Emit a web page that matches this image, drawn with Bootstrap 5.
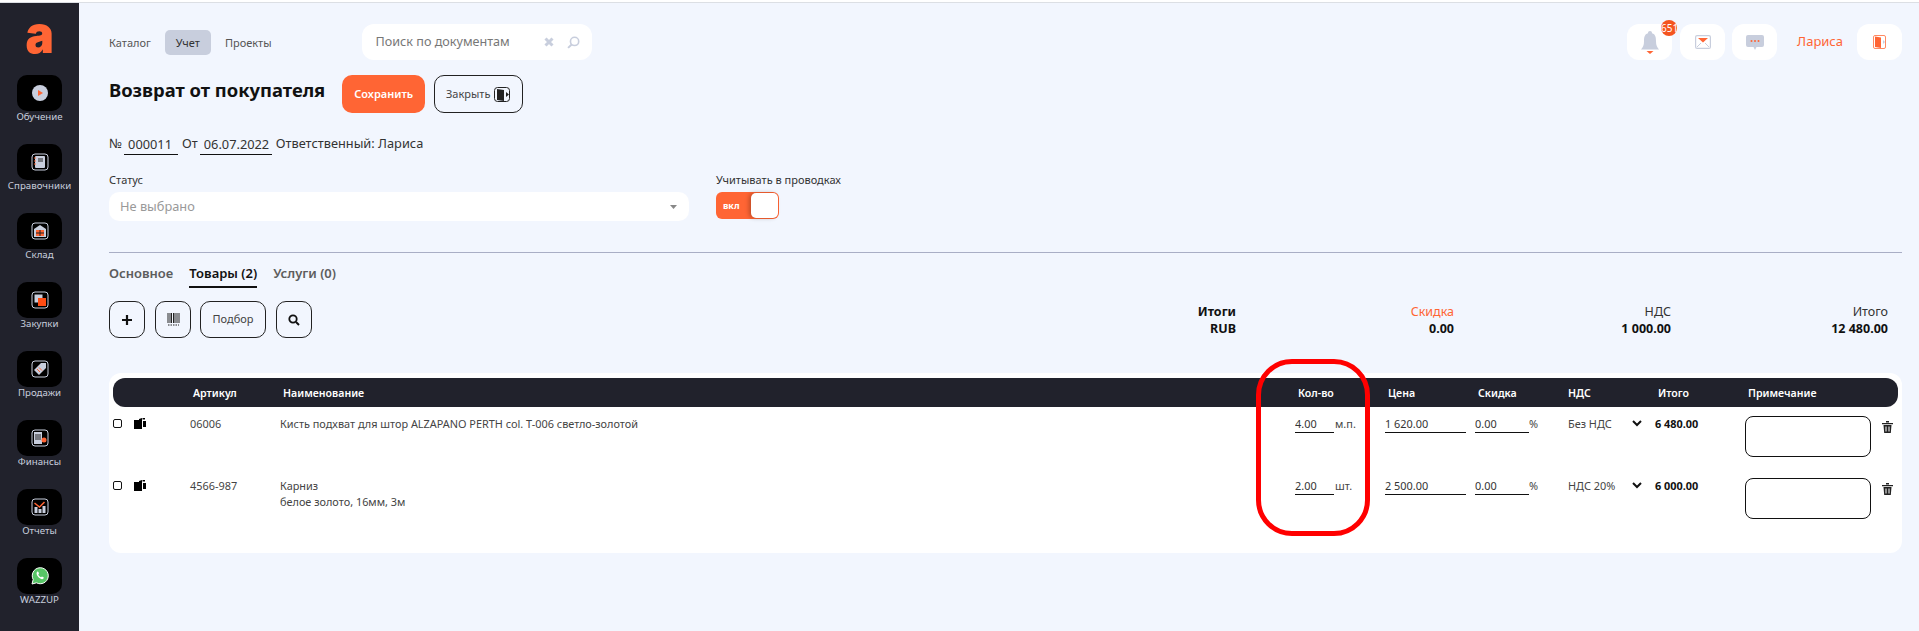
<!DOCTYPE html>
<html lang="ru">
<head>
  <meta charset="utf-8">
  <title>Возврат от покупателя</title>
  <link href="https://cdn.jsdelivr.net/npm/bootstrap@5.3.0/dist/css/bootstrap.min.css" rel="stylesheet">
  <style>
    html, body { height: 100%; }
    body { font-family: "Noto Sans", "Open Sans", sans-serif; background: #f2f6fe; color: #333; font-size: 12px; overflow: hidden; }
    .top-strip { height: 3px; background: #fff; border-bottom: 1px solid #dcdfe4; }
    .shell { height: calc(100% - 3px); position: relative; }

    .side { width: 79px; background: #21222c; flex: none; }
    .side-logo { height: 72px; color: #ff6534; font-family: Inter, sans-serif; font-weight: 900; font-size: 53px; line-height: 1; padding-top: 5px; }
    .side-logo span { display: inline-block; transform: scaleX(.9); }
    .side-item { height: 69px; color: #c8cedd; font-size: 9.7px; line-height: 10px; }
    .side-tile { width: 45px; height: 36px; background: #000; border-radius: 10px; margin-bottom: 1px; }
    .side-item svg { width: 18px; height: 18px; }

    .page { padding: 21px 17px 0 30px; min-width: 0; }
    .head-nav a { color: #555; text-decoration: none; font-size: 11px; padding: 0 11px; height: 25px; line-height: 25px; border-radius: 5px; }
    .head-nav a:first-child { padding-left: 0; padding-right: 0; margin-right: 14px; }
    .head-nav a.active { background: #c8cedd; color: #333; }
    .head-nav a.nav-last { margin-left: 3px; }
    .search-box { width: 230px; height: 36px; margin-left: 79px; background: #fff; border-radius: 12px; padding: 0 12px 0 14px; color: #777; font-size: 12.6px; }
    .search-clear { margin-right: 13px; }
    .top-tile { width: 45px; height: 36px; background: #fff; border-radius: 12px; }
    .tile-gap { margin-left: 8px; }
    .tile-gap-s { margin-left: 7px; }
    .bell-count { top: -4px; right: -5px; width: 16px; height: 16px; border-radius: 50%; background: #f4541f; color: #fff; font-size: 10px; line-height: 16px; white-space: nowrap; text-align: left; }
    .user-name { color: #ff6534; font-size: 13px; margin: 0 14px 0 20px; }

    .doc-title { font-size: 18.4px; font-weight: 700; color: #111; margin: 0 17px 8px 0; }
    .btn-save { width: 83px; height: 38px; margin-right: 9px; background: #ff6534; border: 0; border-radius: 10px; color: #fff; font-size: 11px; font-weight: 600; padding: 0; }
    .btn-line { height: 38px; border: 1px solid #222; border-radius: 10px; background: transparent; color: #444; font-size: 11px; padding: 0; }
    .btn-close-doc { width: 89px; }
    .title-row { margin-top: 15px; }

    .doc-line { font-size: 12.8px; margin-top: 20px; height: 22px; color: #333; }
    .line-input { border: 0; border-bottom: 1px solid #111; background: transparent; outline: 0; color: #333; padding: 0; border-radius: 0; }
    .doc-line .line-input { font-size: 12.8px; height: 22px; padding: 0 0 0 4px; margin: 0 4px 0 2px; }
    .input-num { width: 54px; }
    .input-date { width: 72px; }

    .status-col { width: 607px; }
    .field-label { font-size: 11px; line-height: 15px; padding-top: 1px; margin-bottom: 5px; color: #333; }
    .status-select.form-select { width: 580px; height: 29px; border: 0; border-radius: 10px; font-size: 12.8px; color: #999; padding: 0 11px; line-height: 29px; background-size: 7px 4px; background-position: right 12px center; background-image: url("data:image/svg+xml,%3csvg xmlns='http://www.w3.org/2000/svg' viewBox='0 0 7 4'%3e%3cpath fill='%23888' d='M0 0h7L3.500 4z'/%3e%3c/svg%3e"); }
    .toggle-box { width: 63px; height: 27px; background: #ff6534; border-radius: 6px; color: #fff; font-size: 9px; font-weight: 700; padding: 1px 1px 1px 7px; }
    .toggle-knob { width: 27px; height: 25px; background: #fff; border-radius: 5px; box-shadow: -2px 0 4px rgba(0,0,0,.25); }

    .page-rule { margin: 31px 0 0; border: 0; border-top: 1px solid #a9aec5; opacity: 1; }
    .tabs-row { margin-top: 11px; }
    .tabs-row a { font-size: 13px; font-weight: 600; color: #5d5d5d; text-decoration: none; padding-bottom: 4px; border-bottom: 2px solid transparent; line-height: 18px; }
    .tabs-row a.active { color: #111; border-bottom-color: #111; }
    .tools-row { margin-top: 13px; }
    .tools-row .btn-line { height: 37px; }
    .tool-btn { width: 36px; }
    .tool-wide { width: 66px; }
    .gap-10 { margin-right: 10px; }
    .gap-9 { margin-right: 9px; }
    .sum-wrap { padding: 2px 14px 0 0; }
    .sum-cell { width: 217px; text-align: right; line-height: 17px; font-size: 12.5px; color: #333; }
    .sum-cell b { color: #111; font-weight: 700; display: block; }
    .sum-cell .sum-accent { color: #ff6534; }
    .sum-first { font-weight: 700; color: #111; padding-right: 1px; }

    .goods-card { background: #fff; border-radius: 12px; padding: 5px 4px 22px; margin-top: 35px; }
    .goods-grid { display: grid; grid-template-columns: 21px 56px 90px 1fr 90px 90px 90px 90px 90px 153px; }
    .goods-head { background: #21222c; color: #fff; height: 29px; border-radius: 12px; font-size: 10.6px; font-weight: 600; line-height: 30px; }
    .goods-head > div.pad { padding-left: 3px; }
    .goods-row { height: 62px; padding-top: 9px; font-size: 10.9px; line-height: 16px; color: #444; }
    .row-check.form-check-input { width: 9px; height: 9px; margin: 3px 0 0 0; border: 1px solid #111; border-radius: 2px; }
    .row-copy { width: 12px; height: 11px; margin-top: 2px; display: block; }
    .cell-input { font-size: 10.9px; height: 16px; line-height: 16px; box-sizing: content-box; }
    .input-qty { width: 39px; }
    .input-price { width: 81px; }
    .input-disc { width: 54px; }
    .cell-unit { padding-left: 1px; }
    .vat-cell { padding: 0 13px 0 3px; }
    .row-chevron { width: 10px; height: 7px; margin-top: 4px; }
    .row-total { font-weight: 700; color: #111; }
    .row-note { width: 126px; height: 41px; border: 1px solid #111; border-radius: 8px; background: #fff; resize: none; outline: 0; display: block; }
    .row-trash { width: 11px; height: 12px; margin: 5px 0 0 11px; flex: none; }

    .red-mark { left: 1256px; top: 356px; width: 114px; height: 177px; border: 5px solid #f00; border-radius: 36px; pointer-events: none; }
  </style>
</head>
<body>
  <div class="top-strip"></div>
  <div class="shell d-flex">
    <aside class="side text-center">
      <div class="side-logo"><span>a</span></div>
      <div class="side-item d-flex flex-column align-items-center">
        <div class="side-tile d-flex align-items-center justify-content-center">
          <svg viewBox="0 0 18 18"><circle cx="9" cy="9" r="8" fill="#c8cedd"/><path d="M7 6l5 3-5 3z" fill="#ff6534"/></svg>
        </div>
        <span>Обучение</span>
      </div>
      <div class="side-item d-flex flex-column align-items-center">
        <div class="side-tile d-flex align-items-center justify-content-center">
          <svg viewBox="0 0 18 18"><rect x="1" y="1" width="16" height="16" rx="3" fill="none" stroke="#c8cedd"/><rect x="4" y="3" width="10" height="12" rx="1" fill="#c8cedd"/><path d="M3 5h2M3 8h2M3 11h2" stroke="#ff6534"/><path d="M7 6h5M7 8h5" stroke="#222"/></svg>
        </div>
        <span>Справочники</span>
      </div>
      <div class="side-item d-flex flex-column align-items-center">
        <div class="side-tile d-flex align-items-center justify-content-center">
          <svg viewBox="0 0 18 18"><rect x="1" y="1" width="16" height="16" rx="3" fill="none" stroke="#c8cedd"/><path d="M3 7l6-4 6 4v8H3z" fill="#c8cedd"/><rect x="5" y="8" width="8" height="6" fill="#ff6534"/><path d="M9 8v6M5 11h8" stroke="#222"/></svg>
        </div>
        <span>Склад</span>
      </div>
      <div class="side-item d-flex flex-column align-items-center">
        <div class="side-tile d-flex align-items-center justify-content-center">
          <svg viewBox="0 0 18 18"><rect x="1" y="1" width="16" height="16" rx="3" fill="none" stroke="#c8cedd"/><rect x="3.500" y="3.500" width="8" height="8" fill="#c8cedd"/><rect x="7" y="7" width="8" height="8" fill="#ff4d14"/></svg>
        </div>
        <span>Закупки</span>
      </div>
      <div class="side-item d-flex flex-column align-items-center">
        <div class="side-tile d-flex align-items-center justify-content-center">
          <svg viewBox="0 0 18 18"><rect x="1" y="1" width="16" height="16" rx="3" fill="none" stroke="#c8cedd"/><path d="M10 3h5v5l-7 7-5-5z" fill="#c8cedd"/><path d="M6 9l3 3M8 7.500l3 3" stroke="#ff6534"/></svg>
        </div>
        <span>Продажи</span>
      </div>
      <div class="side-item d-flex flex-column align-items-center">
        <div class="side-tile d-flex align-items-center justify-content-center">
          <svg viewBox="0 0 18 18"><rect x="1" y="1" width="16" height="16" rx="3" fill="none" stroke="#c8cedd"/><rect x="3" y="3" width="8" height="12" fill="#c8cedd"/><path d="M4 6h6M4 8h6M4 10h6" stroke="#222"/><circle cx="13" cy="11" r="2.500" fill="#ff6534"/></svg>
        </div>
        <span>Финансы</span>
      </div>
      <div class="side-item d-flex flex-column align-items-center">
        <div class="side-tile d-flex align-items-center justify-content-center">
          <svg viewBox="0 0 18 18"><rect x="1" y="1" width="16" height="16" rx="3" fill="none" stroke="#c8cedd"/><path d="M3.500 9h3v6h-3zM7.500 11h3v4h-3zM11.500 8h3v7h-3z" fill="#c8cedd"/><path d="M3.500 5l5 4 5-5" fill="none" stroke="#ff6534" stroke-width="1.500"/></svg>
        </div>
        <span>Отчеты</span>
      </div>
      <div class="side-item d-flex flex-column align-items-center">
        <div class="side-tile d-flex align-items-center justify-content-center">
          <svg viewBox="0 0 18 18"><path d="M1 17l1.200-4.500A8 8 0 1 1 5.500 15.800z" fill="#57c566" stroke="#fff"/><path d="M6 5c1-1 1.500 0 2 1.500L7.300 7.500c.5 1.300 1.500 2.300 2.700 2.800l1-.8c1.400.6 2.300 1 1.500 2-1 1.300-3.200.6-5-1.200S5 6 6 5z" fill="#fff"/></svg>
        </div>
        <span>WAZZUP</span>
      </div>
    </aside>

    <main class="page flex-grow-1">
      <div class="d-flex align-items-center">
        <nav class="head-nav d-flex align-items-center">
          <a href="#">Каталог</a>
          <a href="#" class="active">Учет</a>
          <a href="#" class="nav-last">Проекты</a>
        </nav>
        <div class="search-box d-flex align-items-center">
          <span class="flex-grow-1">Поиск по документам</span>
          <svg class="search-clear" width="10" height="10" viewBox="0 0 10 10"><path d="M1.500 1.500l7 7M8.500 1.500l-7 7" stroke="#c8cedd" stroke-width="3"/></svg>
          <svg width="13" height="13" viewBox="0 0 12 12"><circle cx="7" cy="5" r="3.800" fill="none" stroke="#c8cedd" stroke-width="1.500"/><path d="M4.300 7.800L1 11" stroke="#c8cedd" stroke-width="1.800"/></svg>
        </div>
        <div class="ms-auto d-flex align-items-center">
          <div class="top-tile d-flex align-items-center justify-content-center position-relative">
            <svg width="18" height="23" viewBox="0 0 18 23"><path d="M9 0a2 2 0 0 1 2 2.200c3.500 1 4 4 4 8 0 4 1 6 3 8.300H0c2-2.300 3-4.300 3-8.300 0-4 .5-7 4-8A2 2 0 0 1 9 0z" fill="#c8cedd"/><path d="M5.500 20h7L9 23z" fill="#ff6534"/></svg>
            <span class="bell-count position-absolute">651</span>
          </div>
          <div class="top-tile tile-gap d-flex align-items-center justify-content-center">
            <svg width="16" height="14" viewBox="0 0 16 14"><rect x=".6" y=".6" width="14.800" height="12.800" rx="1.500" fill="#fff" stroke="#c8cedd" stroke-width="1.200"/><path d="M3 3h10L8 7.500z" fill="#ff6534"/><path d="M2 12l4-4M14 12l-4-4" stroke="#c8cedd"/></svg>
          </div>
          <div class="top-tile tile-gap-s d-flex align-items-center justify-content-center">
            <svg width="18" height="15" viewBox="0 0 18 15"><path d="M2 0h14a2 2 0 0 1 2 2v8a2 2 0 0 1-2 2h-5.500L9 15l-1.500-3H2a2 2 0 0 1-2-2V2a2 2 0 0 1 2-2z" fill="#c8cedd"/><circle cx="5.500" cy="6" r="1" fill="#ff6534"/><circle cx="9" cy="6" r="1" fill="#ff6534"/><circle cx="12.500" cy="6" r="1" fill="#ff6534"/></svg>
          </div>
          <span class="user-name">Лариса</span>
          <div class="top-tile d-flex align-items-center justify-content-center">
            <svg width="13" height="14" viewBox="0 0 13 14"><rect x=".5" y=".5" width="12" height="13" rx="1.500" fill="none" stroke="#ff8a63"/><path d="M2 1.500l6 1v10.500l-6-1z" fill="#ff6534"/><path d="M10 5l2 2-2 2z" fill="#c8cedd"/></svg>
          </div>
        </div>
      </div>

      <div class="title-row d-flex align-items-center">
        <h1 class="doc-title">Возврат от покупателя</h1>
        <button type="button" class="btn-save">Сохранить</button>
        <button type="button" class="btn-line btn-close-doc d-flex align-items-center justify-content-center gap-1 px-2">
          Закрыть
          <svg width="17" height="15" viewBox="0 0 17 15"><rect x=".5" y=".5" width="15" height="14" rx="3" fill="none" stroke="#222"/><path d="M3 2l7 1v11l-7-1z" fill="#222"/><path d="M12 5l3 2.500-3 2.500z" fill="#222"/></svg>
        </button>
      </div>

      <div class="doc-line d-flex align-items-center">
        <span>№</span>
        <input class="line-input input-num" value="000011">
        <span>От</span>
        <input class="line-input input-date" value="06.07.2022">
        <span>Ответственный: Лариса</span>
      </div>

      <div class="d-flex mt-3">
        <div class="status-col">
          <div class="field-label">Статус</div>
          <select class="status-select form-select"><option>Не выбрано</option></select>
        </div>
        <div>
          <div class="field-label">Учитывать в проводках</div>
          <div class="toggle-box d-flex align-items-center justify-content-between">
            <span>вкл</span>
            <span class="toggle-knob"></span>
          </div>
        </div>
      </div>

      <hr class="page-rule">

      <div class="tabs-row d-flex gap-3">
        <a href="#">Основное</a>
        <a href="#" class="active">Товары (2)</a>
        <a href="#">Услуги (0)</a>
      </div>

      <div class="tools-row d-flex">
        <div class="d-flex">
          <button type="button" class="btn-line tool-btn gap-10 d-flex align-items-center justify-content-center">
            <svg width="12" height="12" viewBox="0 0 12 12"><path d="M6 1v10M1 6h10" stroke="#111" stroke-width="2.200"/></svg>
          </button>
          <button type="button" class="btn-line tool-btn gap-9 d-flex align-items-center justify-content-center">
            <svg width="13" height="13" viewBox="0 0 13 13"><path d="M1 0v10M3 0v10M4.500 0v10M6.500 0v10M8 0v10M10 0v10M12 0v10" stroke="#222"/><path d="M1 12h11" stroke="#222" stroke-dasharray="1.500 1"/></svg>
          </button>
          <button type="button" class="btn-line tool-wide gap-10">Подбор</button>
          <button type="button" class="btn-line tool-btn d-flex align-items-center justify-content-center">
            <svg width="12" height="12" viewBox="0 0 12 12"><circle cx="5" cy="5" r="3.700" fill="none" stroke="#111" stroke-width="1.800"/><path d="M8 8l3 3" stroke="#111" stroke-width="2"/></svg>
          </button>
        </div>
        <div class="sum-wrap ms-auto d-flex">
          <div class="sum-cell sum-first">Итоги<b>RUB</b></div>
          <div class="sum-cell"><span class="sum-accent">Скидка</span><b>0.00</b></div>
          <div class="sum-cell">НДС<b>1 000.00</b></div>
          <div class="sum-cell">Итого<b>12 480.00</b></div>
        </div>
      </div>

      <section class="goods-card">
        <div class="goods-grid goods-head">
          <div></div><div></div>
          <div class="pad">Артикул</div>
          <div class="pad">Наименование</div>
          <div class="pad">Кол-во</div>
          <div class="pad">Цена</div>
          <div class="pad">Скидка</div>
          <div class="pad">НДС</div>
          <div class="pad">Итого</div>
          <div class="pad">Примечание</div>
        </div>

        <div class="goods-grid goods-row">
          <div><input type="checkbox" class="row-check form-check-input"></div>
          <div><svg class="row-copy" viewBox="0 0 12 11"><path d="M0 2h5V1l3-1v11H0z" fill="#000"/><path d="M9 3h3v6H9z" fill="#000"/><path d="M8.500 0H11v1.500H8.500z" fill="#000"/></svg></div>
          <div>06006</div>
          <div>Кисть подхват для штор ALZAPANO PERTH col. T-006 светло-золотой</div>
          <div class="d-flex align-items-start"><input class="line-input cell-input input-qty" value="4.00"><span class="cell-unit">м.п.</span></div>
          <div><input class="line-input cell-input input-price" value="1 620.00"></div>
          <div class="d-flex align-items-start"><input class="line-input cell-input input-disc" value="0.00"><span>%</span></div>
          <div class="vat-cell d-flex justify-content-between align-items-start"><span>Без НДС</span><svg class="row-chevron" viewBox="0 0 10 7"><path d="M1 1l4 4 4-4" fill="none" stroke="#111" stroke-width="2"/></svg></div>
          <div><span class="row-total">6 480.00</span></div>
          <div class="d-flex align-items-start">
            <textarea class="row-note"></textarea>
            <svg class="row-trash" viewBox="0 0 11 12"><path d="M0 2h11v1.300H0zM4 0h3v1.500H4zM1.500 4h8l-.7 8H2.200z" fill="#222"/><path d="M4 5.500v5M7 5.500v5" stroke="#fff"/></svg>
          </div>
        </div>

        <div class="goods-grid goods-row">
          <div><input type="checkbox" class="row-check form-check-input"></div>
          <div><svg class="row-copy" viewBox="0 0 12 11"><path d="M0 2h5V1l3-1v11H0z" fill="#000"/><path d="M9 3h3v6H9z" fill="#000"/><path d="M8.500 0H11v1.500H8.500z" fill="#000"/></svg></div>
          <div>4566-987</div>
          <div>Карниз<br>белое золото, 16мм, 3м</div>
          <div class="d-flex align-items-start"><input class="line-input cell-input input-qty" value="2.00"><span class="cell-unit">шт.</span></div>
          <div><input class="line-input cell-input input-price" value="2 500.00"></div>
          <div class="d-flex align-items-start"><input class="line-input cell-input input-disc" value="0.00"><span>%</span></div>
          <div class="vat-cell d-flex justify-content-between align-items-start"><span>НДС 20%</span><svg class="row-chevron" viewBox="0 0 10 7"><path d="M1 1l4 4 4-4" fill="none" stroke="#111" stroke-width="2"/></svg></div>
          <div><span class="row-total">6 000.00</span></div>
          <div class="d-flex align-items-start">
            <textarea class="row-note"></textarea>
            <svg class="row-trash" viewBox="0 0 11 12"><path d="M0 2h11v1.300H0zM4 0h3v1.500H4zM1.500 4h8l-.7 8H2.200z" fill="#222"/><path d="M4 5.500v5M7 5.500v5" stroke="#fff"/></svg>
          </div>
        </div>
      </section>

      <div class="red-mark position-absolute"></div>
    </main>
  </div>
  <script src="https://cdn.jsdelivr.net/npm/bootstrap@5.3.0/dist/js/bootstrap.bundle.min.js"></script>
</body>
</html>
